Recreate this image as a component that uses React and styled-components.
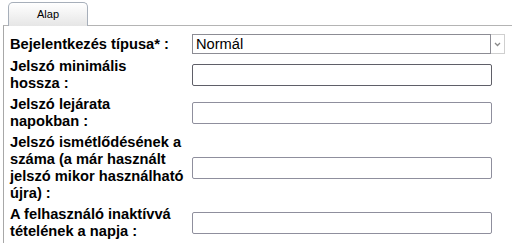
import React from "react";
import styled, { createGlobalStyle } from "styled-components";

const Global = createGlobalStyle`
  html, body { margin: 0; padding: 0; background: #fff; }
  body { font-family: "Liberation Sans", Arial, sans-serif; color: #000; }
`;

const Page = styled.div`
  width: 512px;
  height: 243px;
  overflow: hidden;
  padding-top: 2px;
  box-sizing: border-box;
`;

const TabStrip = styled.div`
  display: flex;
  padding-left: 8px;
  position: relative;
  z-index: 1;
  margin-bottom: -1px;
`;

const Tab = styled.div`
  width: 80px;
  height: 24px;
  box-sizing: border-box;
  border: 1px solid #a7afba;
  border-bottom: none;
  border-radius: 5px 5px 0 0;
  background: linear-gradient(#ffffff, #e6e6e6);
  font-size: 11px;
  display: flex;
  align-items: center;
  justify-content: center;
  padding-bottom: 1px;
`;

const Panel = styled.div`
  margin-left: 3px;
  border-top: 1px solid #b4b4b4;
  border-left: 1px solid #a8a8a8;
  padding: 8px 0 10px 6px;
`;

const Form = styled.div`
  display: grid;
  grid-template-columns: 176px auto;
  column-gap: 6px;
  row-gap: 4px;
  align-items: center;
  justify-content: start;
`;

const Label = styled.div`
  font-weight: bold;
  font-size: 14.67px;
  line-height: 17px;
`;

const TextBox = styled.input`
  width: 300px;
  height: 22px;
  box-sizing: border-box;
  margin: 0;
  border: 1px solid ${(p) => (p.$dark ? "#5f5f68" : "#8f8f9d")};
  border-radius: 2px;
  background: #fff;
  font: 14.67px "Liberation Sans", Arial, sans-serif;
  padding: 0 3px;
`;

const Select = styled.div`
  width: 313px;
  height: 20px;
  box-sizing: border-box;
  border: 1px solid #cfcfcf;
  display: flex;
  background: #fff;
`;

const SelectValue = styled.div`
  flex: 1;
  border: 1px solid #8c8c94;
  margin: -1px 0 -1px -1px;
  font-size: 14.67px;
  line-height: 18px;
  padding-left: 3px;
`;

const SelectButton = styled.div`
  width: 13px;
  display: flex;
  align-items: center;
  justify-content: center;
`;

const NB = "\u00a0";

const fields = [
  [`Jelszó minimális hossza${NB}:`, true],
  [`Jelszó lejárata napokban${NB}:`, false],
  [`Jelszó ismétlődésének a száma (a már használt jelszó mikor használható újra)${NB}:`, false],
  [`A felhasználó inaktívvá tételének a napja${NB}:`, false],
];

export default function App() {
  return (
    <Page>
      <Global />
      <TabStrip>
        <Tab>Alap</Tab>
      </TabStrip>
      <Panel>
        <Form>
          <Label>{`Bejelentkezés típusa*${NB}:`}</Label>
          <Select>
            <SelectValue>Normál</SelectValue>
            <SelectButton>
              <svg width="7" height="5" viewBox="0 0 7 5">
                <polyline points="1,1 3.5,3.5 6,1" fill="none" stroke="#8a8a8a" strokeWidth="1.3" />
              </svg>
            </SelectButton>
          </Select>
          {fields.map(([label, dark]) => (
            <React.Fragment key={label}>
              <Label>{label}</Label>
              <TextBox type="text" $dark={dark} />
            </React.Fragment>
          ))}
        </Form>
      </Panel>
    </Page>
  );
}
